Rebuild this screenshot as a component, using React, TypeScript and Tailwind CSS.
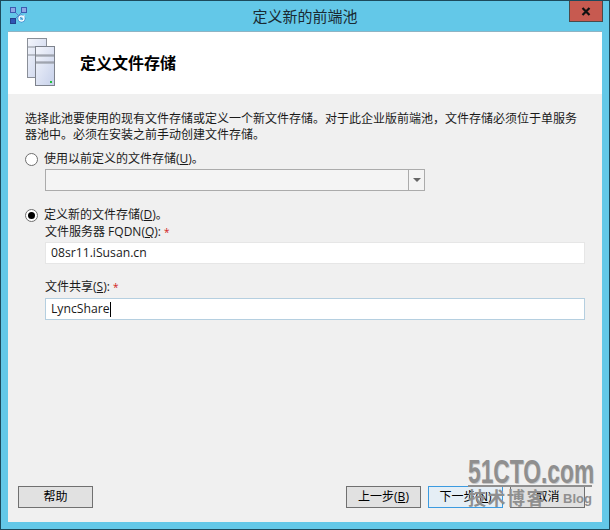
import React from 'react';

const FONT = "font-['Open_Sans','Noto_Sans_CJK_SC',sans-serif]";

function ServerIcon() {
  return (
    <svg width="32" height="50" viewBox="0 0 32 50" className="block">
      <defs>
        <linearGradient id="srv" x1="0" y1="0" x2="1" y2="1">
          <stop offset="0" stopColor="#f4f6fc" />
          <stop offset="1" stopColor="#c6d0ea" />
        </linearGradient>
      </defs>
      <rect x="0.5" y="0.5" width="19" height="39" fill="url(#srv)" stroke="#8a8f98" />
      <path d="M1 9h18M1 17h18" stroke="#8a8f98" />
      <rect x="8.5" y="8.5" width="19" height="39" fill="url(#srv)" stroke="#7d828c" />
      <path d="M9 17h18M9 18h18M9 24h18M9 25h18" stroke="#8a8f98" />
      <rect x="23" y="43" width="2" height="2" fill="#22c03c" />
    </svg>
  );
}

function AppIcon() {
  return (
    <svg width="17" height="17" viewBox="0 0 17 17" className="block">
      <path d="M3 3l11 11M14 3L3 14" stroke="#5a7fc8" strokeWidth="1" />
      <rect x="0.5" y="0.5" width="5" height="5" fill="#8fa8e4" stroke="#3c5cb0" />
      <rect x="11.5" y="0.5" width="5" height="5" fill="#8fa8e4" stroke="#3c5cb0" />
      <rect x="0.5" y="11.5" width="5" height="5" fill="#2f55b4" stroke="#24408c" />
      <circle cx="11.5" cy="11.5" r="3.5" fill="none" stroke="#2f78c8" strokeWidth="1" />
      <circle cx="11.5" cy="11.5" r="2.5" fill="none" stroke="#f2fbff" strokeWidth="1.4" />
      <path d="M14.5 7.5v3h-3z" fill="#f2fbff" />
    </svg>
  );
}

function Radio({ checked }: { checked?: boolean }) {
  return (
    <span className="w-[13px] h-[13px] rounded-full border border-[#6f6f6f] bg-white flex items-center justify-center shrink-0">
      {checked && <span className="w-[7px] h-[7px] rounded-full bg-black" />}
    </span>
  );
}

function Btn({ children, active }: { children: React.ReactNode; active?: boolean }) {
  return (
    <div
      className={
        'w-[75px] h-[22px] flex items-center justify-center text-xs text-black border ' +
        (active ? 'border-[#3c9be0] bg-[#e5eef5]' : 'border-[#707070] bg-[#e1e1e1]')
      }
    >
      {children}
    </div>
  );
}

export default function App() {
  return (
    <div className={`relative w-[610px] h-[530px] overflow-hidden flex flex-col bg-[#63c8e8] border border-[#1c4a5c] ${FONT}`}>
      {/* Title bar */}
      <div className="h-[30px] shrink-0 relative flex items-center justify-center text-[15px] text-[#1a2a32]">
        <div className="absolute left-[9px] top-[6px]">
          <AppIcon />
        </div>
        <span>定义新的前端池</span>
        <div className="absolute right-[6px] top-[-1px] w-[34px] h-[22px] bg-[#c75a50] border border-[#4a4a4a] flex items-center justify-center">
          <svg width="10" height="9" viewBox="0 0 10 9">
            <path d="M1.5 1l7 7M8.5 1l-7 7" stroke="#111" strokeWidth="2.2" />
          </svg>
        </div>
      </div>

      {/* Client area */}
      <div className="mx-[7px] flex-1 flex flex-col bg-[#f0f0f0] text-xs text-[#1a1a1a]">
        <div className="h-[63px] shrink-0 bg-white flex items-center pl-[19px] border-t border-[#8fb4c4]">
          <ServerIcon />
          <h1 className="ml-[21px] text-base font-bold text-black">定义文件存储</h1>
        </div>

        <div className="pl-[17px] pr-[17px] pt-[17px] flex-1 flex flex-col">
          <p className="leading-4 w-[560px]">
            选择此池要使用的现有文件存储或定义一个新文件存储。对于此企业版前端池，文件存储必须位于单服务器池中。必须在安装之前手动创建文件存储。
          </p>

          <label className="mt-[8px] flex items-center gap-[6px] h-4">
            <Radio />
            <span>
              使用以前定义的文件存储(<u>U</u>)。
            </span>
          </label>
          <div className="mt-[2px] ml-[20px] w-[380px] h-[22px] flex bg-[#f4f4f4] border border-[#ababab]">
            <div className="flex-1" />
            <div className="w-4 border-l border-[#ababab] flex items-center justify-center">
              <span className="w-0 h-0 border-x-[4px] border-x-transparent border-t-[4px] border-t-[#666]" />
            </div>
          </div>

          <label className="mt-[16px] flex items-center gap-[6px] h-4">
            <Radio checked />
            <span>
              定义新的文件存储(<u>D</u>)。
            </span>
          </label>
          <div className="ml-[20px] mt-px h-4 leading-4">
            文件服务器 FQDN(<u>Q</u>): <span className="text-[#d02020] text-[10px]">*</span>
          </div>
          <div className="ml-[20px] mt-[2px] w-[540px] h-[22px] bg-white border border-[#e6e6e6] flex items-center pl-[5px] text-[12.2px]">
            08sr11.iSusan.cn
          </div>
          <div className="ml-[20px] mt-[15px] h-4 leading-4">
            文件共享(<u>S</u>): <span className="text-[#d02020] text-[10px]">*</span>
          </div>
          <div className="ml-[20px] mt-[3px] w-[540px] h-[22px] bg-white border border-[#b5cfe0] flex items-center pl-[5px] text-[12.2px]">
            LyncShare
            <span className="w-px h-[15px] bg-black" />
          </div>

          <div className="mt-auto mb-[14px] flex ml-[-7px] gap-[7px]">
            <Btn>帮助</Btn>
            <div className="flex-1" />
            <Btn>
              上一步(<u>B</u>)
            </Btn>
            <Btn active>下一步(<u>N</u>)</Btn>
            <Btn>取消</Btn>
          </div>
        </div>
      </div>
      <div className="h-[7px] shrink-0" />

      {/* Watermark */}
      <div className="absolute left-[467px] top-[456px] w-[124px] pointer-events-none text-[#8f8f8f] font-['Liberation_Sans','Noto_Sans_CJK_SC',sans-serif]">
        <div className="border-b-2 border-[#8f8f8f] h-[30px]">
          <div className="text-[34px] leading-[29px] font-bold whitespace-nowrap origin-left scale-x-[0.67] [text-shadow:1px_1px_0_#c8c8c8]">
            51CTO.com
          </div>
        </div>
        <div className="flex items-center justify-between mt-[1px]">
          <span className="text-[18px] leading-[22px] font-bold tracking-[1.5px]">技术博客</span>
          <span className="text-[13px] font-bold">Blog</span>
        </div>
      </div>
    </div>
  );
}
